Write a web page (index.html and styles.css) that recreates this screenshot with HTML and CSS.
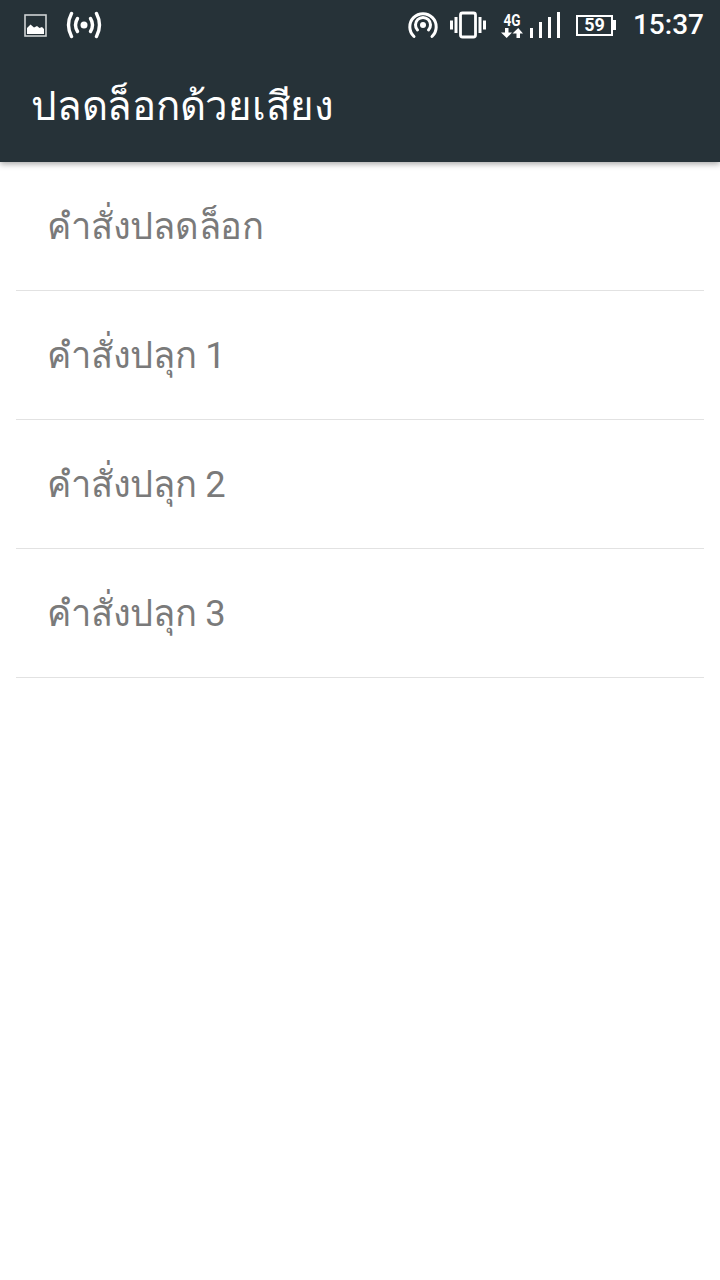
FILE: index.html
```html
<!DOCTYPE html>
<html lang="th">
<head>
<meta charset="utf-8">
<title>ปลดล็อกด้วยเสียง</title>
<link rel="stylesheet" href="styles.css">
</head>
<body>
<header class="appbar">
  <div class="status">
    <div class="status-left">
      <svg class="ic-pic" width="23" height="23" viewBox="0 0 23 23"><rect x="1" y="1" width="21" height="21" fill="none" stroke="#cfd3d4" stroke-width="1.600"/><path d="M3 20V14L6.500 10.500L10 13.500L13 12L15.500 14L18 13L20 15V20Z" fill="#fff"/></svg>
      <svg class="ic-cast" width="36" height="28" viewBox="0 0 36 28" fill="none" stroke="#fff" stroke-width="3.400" stroke-linecap="round"><circle cx="18" cy="14" r="3.500" fill="#fff" stroke="none"/><path d="M11.500 7.500Q7.500 14 11.500 20.500"/><path d="M24.500 7.500Q28.500 14 24.500 20.500"/><path d="M5.500 2.500Q-.5 14 5.500 25.500"/><path d="M30.500 2.500Q36.500 14 30.500 25.500"/></svg>
    </div>
    <div class="status-right">
      <svg class="ic-hot" width="30" height="28" viewBox="0 0 30 28" fill="none" stroke="#fff" stroke-width="3" stroke-linecap="round"><circle cx="15" cy="14" r="3" fill="#fff" stroke="none"/><path d="M9.500 19A7.500 7.500 0 1 1 20.500 19"/><path d="M6 25.500A13.200 13.200 0 1 1 24 25.500"/></svg>
      <svg class="ic-vib" width="36" height="28" viewBox="0 0 36 28" fill="none" stroke="#fff"><rect x="10.500" y="2" width="15" height="24" rx="2" stroke-width="2.800"/><path d="M6 6V22M1.500 9.500V18.500M30 6V22M34.500 9.500V18.500" stroke-width="3"/></svg>
      <div class="net">
        <span class="net-label">4G</span>
        <svg class="net-arrows" width="22" height="10" viewBox="0 0 22 10" fill="#fff"><path d="M4 0H7.500V4.500H11L5.700 10L0 4.500H4Z"/><path d="M15.500 10H19V5.500H22L17.200 0L11.500 5.500H15.500Z"/></svg>
      </div>
      <svg class="ic-sig" width="30" height="26" viewBox="0 0 30 26" fill="#fff"><rect x="0" y="16" width="3" height="10"/><rect x="9" y="10" width="3" height="16"/><rect x="18" y="5" width="3" height="21"/><rect x="27" y="0" width="3" height="26"/></svg>
      <div class="battery"><span class="battery-level">59</span></div>
      <span class="clock">15:37</span>
    </div>
  </div>
  <h1 class="title">ปลดล็อกด้วยเสียง</h1>
</header>
<ul class="list">
  <li class="row">คำสั่งปลดล็อก</li>
  <li class="row">คำสั่งปลุก 1</li>
  <li class="row">คำสั่งปลุก 2</li>
  <li class="row">คำสั่งปลุก 3</li>
</ul>
</body>
</html>
```
FILE: styles.css
```css
* { box-sizing: border-box; }
html, body { margin: 0; padding: 0; height: 100%; background: #fff; }
body { font-family: Roboto, "Noto Sans", "DejaVu Sans", sans-serif; }
.appbar {
  height: 162px;
  background: #263238;
  color: #fff;
  box-shadow: 0 2px 6px rgba(0,0,0,.35);
  position: relative;
}
.status {
  height: 50px;
  display: flex;
  justify-content: space-between;
  align-items: center;
  padding: 0 16px 0 24px;
}
.status-left, .status-right { display: flex; align-items: center; }
.ic-pic { margin-right: 19px; }
.ic-hot { margin-right: 12px; }
.ic-vib { margin-right: 15px; }
.net { width: 22px; display: flex; flex-direction: column; align-items: center; margin-right: 7px; }
.net-label { font-size: 16px; font-weight: 700; line-height: 15px; transform: scaleX(.85); }
.net-arrows { display: block; }
.ic-sig { margin-right: 16px; }
.battery {
  width: 37px;
  height: 21px;
  border: 2px solid #fff;
  display: flex;
  align-items: center;
  justify-content: center;
  position: relative;
  margin-right: 20px;
}
.battery::after {
  content: "";
  position: absolute;
  right: -5px;
  top: 3px;
  width: 3px;
  height: 10px;
  background: #fff;
}
.battery-level { font-size: 18px; font-weight: 700; line-height: 1; }
.clock { font-size: 28px; line-height: 1; font-weight: 500; }
.title {
  margin: 0;
  padding: 31px 0 0 31px;
  font-size: 40.2px;
  font-weight: 400;
  line-height: 52px;
  letter-spacing: -.25px;
}
.list { list-style: none; margin: 0; padding: 0 16px; }
.row {
  height: 129px;
  padding: 43px 0 0 31px;
  border-bottom: 1px solid #e2e2e2;
  color: #7a7a7a;
  font-size: 36.3px;
  line-height: 44px;
  letter-spacing: -.25px;
}
```
